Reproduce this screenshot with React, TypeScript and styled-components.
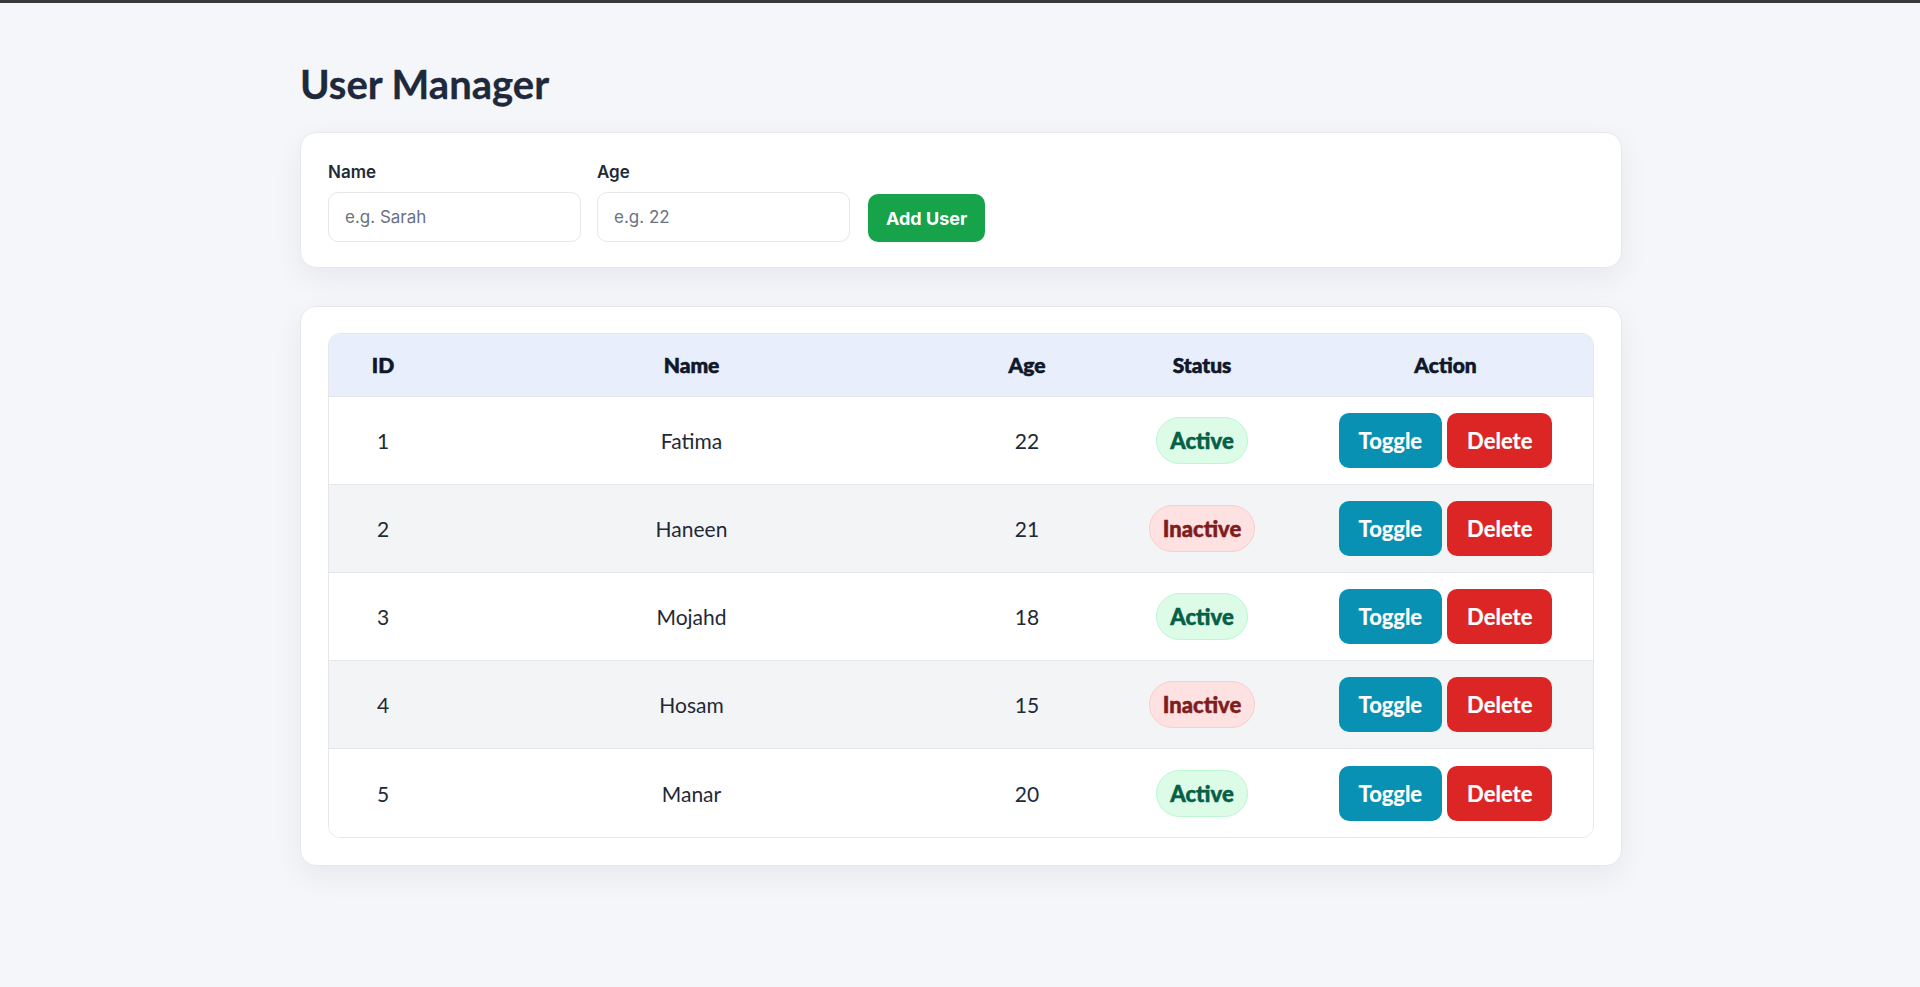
import React, { useState } from "react";
import styled, { createGlobalStyle } from "styled-components";

const GlobalStyle = createGlobalStyle`
  html, body {
    margin: 0;
    padding: 0;
    background: #f5f6fa;
  }
  body {
    font-family: "Lato", "Open Sans", sans-serif;
    color: #1f2937;
    border-top: 3px solid #3a3a3a;
    min-height: 984px;
  }
  * { box-sizing: border-box; }
`;

const Page = styled.main`
  width: 1324px;
  margin: 0 auto;
  padding: 57px 0 0 2px;
`;

const Title = styled.h1`
  margin: 0 0 24px;
  font-family: "Lato", sans-serif;
  font-size: 40px;
  line-height: 48px;
  font-weight: 700;
  color: #1e293b;
  -webkit-text-stroke: 0.3px #1e293b;
`;

const Card = styled.section<{ $pad: string }>`
  background: #ffffff;
  border: 1px solid #e6e8ee;
  border-radius: 16px;
  box-shadow: 0 10px 30px rgba(15, 23, 42, 0.06);
  padding: ${(p) => p.$pad};
  & + & {
    margin-top: 38px;
  }
`;

const Form = styled.form`
  display: flex;
  align-items: flex-end;
  gap: 16px;
  font-family: "Inter", sans-serif;
`;

const Field = styled.div`
  display: flex;
  flex-direction: column;
  width: 253px;
`;

const Label = styled.label`
  font-size: 17px;
  line-height: 24px;
  font-weight: 600;
  color: #1f2937;
  margin-bottom: 8px;
`;

const Input = styled.input`
  height: 50px;
  border: 1px solid #e5e7eb;
  border-radius: 10px;
  padding: 0 16px;
  font-family: "Inter", sans-serif;
  font-size: 17px;
  color: #111827;
  background: #fff;
  outline: none;
  &::placeholder {
    color: #6b7280;
  }
`;

const AddButton = styled.button`
  height: 48px;
  margin-left: 2px;
  padding: 0 18px;
  border: none;
  border-radius: 10px;
  background: #16a34a;
  color: #fff;
  font-family: "Inter", sans-serif;
  font-size: 18px;
  font-weight: 700;
  cursor: pointer;
`;

const TableWrap = styled.div`
  border: 1px solid #e5e7eb;
  border-radius: 12px;
  overflow: hidden;
`;

const Table = styled.table`
  width: 100%;
  border-collapse: separate;
  border-spacing: 0;
  table-layout: fixed;
  font-family: "Lato", sans-serif;
`;

const Th = styled.th`
  background: #e8eefc;
  padding: 17px 16px;
  line-height: 28px;
  font-size: 21px;
  font-weight: 900;
  color: #0f172a;
  -webkit-text-stroke: 0.6px #0f172a;
  text-align: center;
  border-bottom: 1px solid #e5e7eb;
`;

const Tr = styled.tr<{ $alt: boolean; $last: boolean }>`
  background: ${(p) => (p.$alt ? "#f3f4f6" : "#ffffff")};
  & > td {
    border-bottom: ${(p) => (p.$last ? "none" : "1px solid #e5e7eb")};
  }
`;

const Td = styled.td`
  padding: 16px;
  height: 88px;
  font-size: 21px;
  line-height: 55px;
  color: #1f2937;
  text-align: center;
  vertical-align: middle;
`;

const Badge = styled.span<{ $active: boolean }>`
  display: inline-block;
  padding: 10px 13px;
  border-radius: 999px;
  font-size: 22px;
  line-height: 25px;
  font-weight: 900;
  vertical-align: top;
  margin-top: 4px;
  background: ${(p) => (p.$active ? "#dcfce7" : "#fee2e2")};
  border: 1px solid ${(p) => (p.$active ? "#bbf7d0" : "#fecaca")};
  color: ${(p) => (p.$active ? "#065f46" : "#7f1d1d")};
  -webkit-text-stroke: 0.5px ${(p) => (p.$active ? "#065f46" : "#7f1d1d")};
`;

const Actions = styled.div`
  display: flex;
  justify-content: center;
  gap: 5px;
`;

const ActionButton = styled.button<{ $tone: "toggle" | "delete" }>`
  height: 55px;
  padding: 0 20px;
  border: none;
  border-radius: 10px;
  background: ${(p) => (p.$tone === "toggle" ? "#0891b2" : "#dc2626")};
  color: #fff;
  font-family: "Lato", sans-serif;
  font-size: 22px;
  font-weight: 700;
  -webkit-text-stroke: 0.2px #fff;
  cursor: pointer;
`;

type User = { id: number; name: string; age: number; active: boolean };

const initialUsers: User[] = [
  { id: 1, name: "Fatima", age: 22, active: true },
  { id: 2, name: "Haneen", age: 21, active: false },
  { id: 3, name: "Mojahd", age: 18, active: true },
  { id: 4, name: "Hosam", age: 15, active: false },
  { id: 5, name: "Manar", age: 20, active: true },
];

const colWidths = [108, 509, 162, 188, 299];

export default function App() {
  const [users, setUsers] = useState<User[]>(initialUsers);
  const [name, setName] = useState("");
  const [age, setAge] = useState("");

  const addUser = (e: React.FormEvent) => {
    e.preventDefault();
    if (!name.trim() || !age.trim()) return;
    const nextId = users.length ? Math.max(...users.map((u) => u.id)) + 1 : 1;
    setUsers([...users, { id: nextId, name: name.trim(), age: Number(age), active: true }]);
    setName("");
    setAge("");
  };

  return (
    <>
      <GlobalStyle />
      <Page>
        <Title>User Manager</Title>
        <Card $pad="27px 27px 25px">
          <Form onSubmit={addUser}>
            <Field>
              <Label htmlFor="name">Name</Label>
              <Input id="name" placeholder="e.g. Sarah" value={name} onChange={(e) => setName(e.target.value)} />
            </Field>
            <Field>
              <Label htmlFor="age">Age</Label>
              <Input id="age" placeholder="e.g. 22" value={age} onChange={(e) => setAge(e.target.value)} />
            </Field>
            <AddButton type="submit">Add User</AddButton>
          </Form>
        </Card>
        <Card $pad="26px 27px 27px">
          <TableWrap>
            <Table>
              <colgroup>
                {colWidths.map((w, i) => (
                  <col key={i} style={{ width: w }} />
                ))}
              </colgroup>
              <thead>
                <tr>
                  <Th>ID</Th>
                  <Th>Name</Th>
                  <Th>Age</Th>
                  <Th>Status</Th>
                  <Th>Action</Th>
                </tr>
              </thead>
              <tbody>
                {users.map((u, i) => (
                  <Tr key={u.id} $alt={i % 2 === 1} $last={i === users.length - 1}>
                    <Td>{u.id}</Td>
                    <Td>{u.name}</Td>
                    <Td>{u.age}</Td>
                    <Td>
                      <Badge $active={u.active}>{u.active ? "Active" : "Inactive"}</Badge>
                    </Td>
                    <Td>
                      <Actions>
                        <ActionButton
                          $tone="toggle"
                          onClick={() =>
                            setUsers(users.map((x) => (x.id === u.id ? { ...x, active: !x.active } : x)))
                          }
                        >
                          Toggle
                        </ActionButton>
                        <ActionButton $tone="delete" onClick={() => setUsers(users.filter((x) => x.id !== u.id))}>
                          Delete
                        </ActionButton>
                      </Actions>
                    </Td>
                  </Tr>
                ))}
              </tbody>
            </Table>
          </TableWrap>
        </Card>
      </Page>
    </>
  );
}
